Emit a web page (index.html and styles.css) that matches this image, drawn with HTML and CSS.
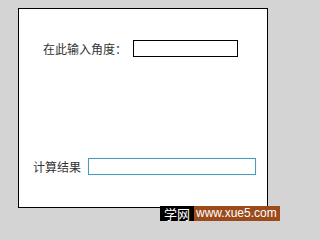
FILE: index.html
```html
<!DOCTYPE html>
<html lang="zh">
<head>
<meta charset="utf-8">
<link rel="stylesheet" href="styles.css">
</head>
<body>
<div class="panel">
  <div class="row row-angle">
    <span class="label label-angle">在此输入角度：</span>
    <input class="field field-angle" type="text">
  </div>
  <div class="row row-result">
    <span class="label">计算结果</span>
    <input class="field field-result" type="text">
  </div>
</div>
<div class="watermark"><span class="wm-cn">学网</span><span class="wm-url">www.xue5.com</span></div>
</body>
</html>
```
FILE: styles.css
```css
html, body {
  margin: 0;
  padding: 0;
}
body {
  background: #d4d4d4;
  width: 280px;
  height: 221px;
  overflow: hidden;
  position: relative;
  font-family: "Noto Sans CJK SC", "Liberation Sans", sans-serif;
}
.panel {
  margin: 8px 0 0 18px;
  width: 248px;
  height: 198px;
  border: 1px solid #000;
  background: #fff;
  display: flex;
  flex-direction: column;
}
.row {
  display: flex;
  align-items: center;
}
.row-angle {
  margin-top: 31px;
  padding-left: 24px;
}
.row-result {
  margin-top: 101px;
  padding-left: 14px;
}
.label {
  font-size: 12px;
  line-height: 17px;
  color: #333;
  white-space: nowrap;
}
.label-angle {
  width: 90px;
}
.row-result .label {
  margin-right: 7px;
}
.field {
  box-sizing: border-box;
  margin: 0;
  padding: 0;
  outline: none;
  background: #fff;
}
.field-angle {
  width: 105px;
  height: 17px;
  border: 1px solid #000;
}
.field-result {
  width: 168px;
  height: 17px;
  border: 1px solid #4a9cbc;
  box-shadow: 0 0 1px #bfe4f0;
}
.watermark {
  position: absolute;
  left: 160px;
  top: 206px;
  width: 120px;
  height: 15px;
  display: flex;
  color: #fff;
}
.wm-cn {
  background: #000;
  width: 34px;
  font-size: 13px;
  line-height: 15px;
  text-align: center;
}
.wm-url {
  flex: 1;
  background: #9c4a1c;
  font-family: "Liberation Sans", sans-serif;
  font-size: 12px;
  line-height: 15px;
  padding-left: 2px;
}
```
